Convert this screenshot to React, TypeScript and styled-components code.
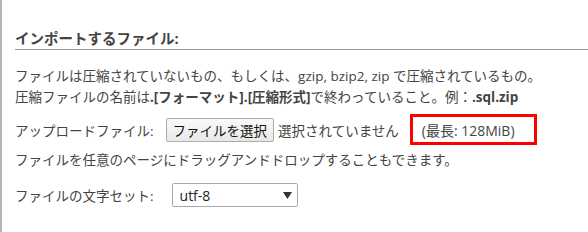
import React from "react";
import styled, { createGlobalStyle } from "styled-components";

const Global = createGlobalStyle`
  html, body { margin: 0; padding: 0; background: #fff; }
  body {
    font-family: "Open Sans", "Noto Sans CJK JP", sans-serif;
    color: #444;
  }
`;

const Page = styled.div`
  min-height: 232px;
  border-left: 2px solid #b4b4b4;
  padding-left: 13px;
  box-sizing: border-box;
  overflow: hidden;
`;

const Heading = styled.h2`
  margin: 29px 0 0;
  font-size: 14.5px;
  font-weight: bold;
  line-height: 20px;
  color: #444;
  border-bottom: 1px solid #999;
`;

const Para = styled.p<{ $top: number }>`
  margin: ${(p) => p.$top}px 0 0;
  font-size: 13.5px;
  line-height: 21px;
  white-space: nowrap;
`;

const Row = styled.div<{ $top: number; $h: number }>`
  display: flex;
  align-items: center;
  height: ${(p) => p.$h}px;
  margin-top: ${(p) => p.$top}px;
  font-size: 13.5px;
  white-space: nowrap;
`;

const Label = styled.span<{ $gap: number }>`
  margin-right: ${(p) => p.$gap}px;
`;

const FileButton = styled.button`
  height: 24px;
  padding: 0 6px;
  border: 1px solid #adadad;
  border-radius: 2px;
  background: linear-gradient(#fafafa, #e8e8e8);
  font-family: inherit;
  font-size: 13.5px;
  color: #111;
  margin-right: 4px;
`;

const Highlight = styled.span`
  display: flex;
  align-items: center;
  box-sizing: border-box;
  height: 31px;
  width: 127px;
  margin-left: 11px;
  padding-left: 9px;
  border: 3px solid #f00;
  font-size: 14px;
`;

const SelectBox = styled.div`
  display: flex;
  align-items: center;
  justify-content: space-between;
  box-sizing: border-box;
  width: 126px;
  height: 24px;
  padding: 0 5px 0 7px;
  border: 1px solid #aaa;
  border-radius: 2px;
  background: #fff;
  color: #222;
  font-size: 14px;
`;

export default function App() {
  return (
    <>
      <Global />
      <Page>
        <Heading>インポートするファイル:</Heading>
        <Para $top={16}>
          ファイルは圧縮されていないもの、もしくは、gzip, bzip2, zip で圧縮されているもの。
          <br />
          圧縮ファイルの名前は<b>.[フォーマット].[圧縮形式]</b>で終わっていること。例：<b>.sql.zip</b>
        </Para>
        <Row $top={6} $h={31}>
          <Label $gap={12}>アップロードファイル:</Label>
          <FileButton>ファイルを選択</FileButton>
          <span>選択されていません</span>
          <Highlight>(最長: 128MiB)</Highlight>
        </Row>
        <Para $top={5}>ファイルを任意のページにドラッグアンドドロップすることもできます。</Para>
        <Row $top={12} $h={24}>
          <Label $gap={18}>ファイルの文字セット:</Label>
          <SelectBox>
            <span>utf-8</span>
            <svg width="9" height="7" viewBox="0 0 9 7">
              <path d="M0 0 H9 L4.5 7 Z" fill="#333" />
            </svg>
          </SelectBox>
        </Row>
      </Page>
    </>
  );
}
